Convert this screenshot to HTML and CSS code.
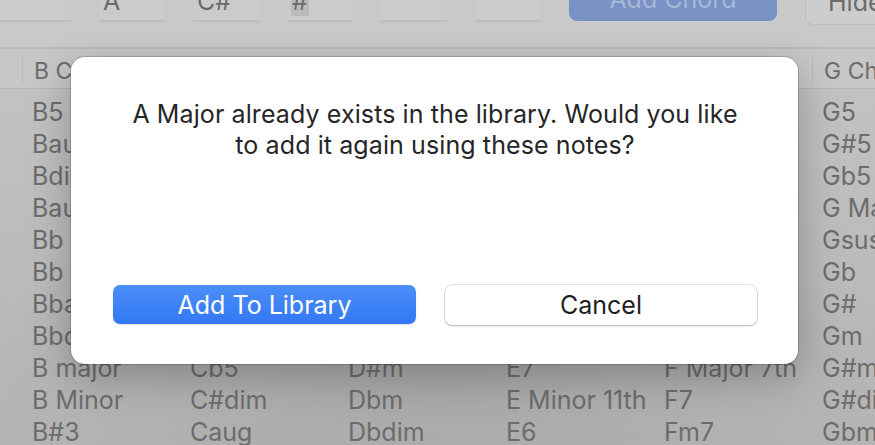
FILE: index.html
```html
<!DOCTYPE html>
<html>
<head>
<meta charset="utf-8">
<link rel="stylesheet" href="styles.css">
</head>
<body>
<div class="window">
  <div class="toolbar">
    <div class="field f-first"></div>
    <div class="field">A</div>
    <div class="field">C#</div>
    <div class="field"><span class="sel">#</span></div>
    <div class="field"></div>
    <div class="field"></div>
    <div class="add-chord">Add Chord</div>
    <div class="hide-btn">Hide</div>
  </div>
  <div class="table">
    <div class="header">
      <div class="spacer"></div>
      <div class="hcell">B Chords</div>
      <div class="hcell">C Chords</div>
      <div class="hcell">D Chords</div>
      <div class="hcell">E Chords</div>
      <div class="hcell">F Chords</div>
      <div class="hcell">G Chords</div>
    </div>
    <div class="body">
      <div class="spacer"></div>
      <div class="col">
        <div>B5</div><div>Baug</div><div>Bdim</div><div>Baug7</div><div>Bb Major</div><div>Bb Minor</div><div>Bbaug</div><div>Bbdim</div><div>B major</div><div>B Minor</div><div>B#3</div>
      </div>
      <div class="col">
        <div>C5</div><div>C#5</div><div>Cb</div><div>C Major</div><div>Csus4</div><div>C#</div><div>Cm</div><div>C#m</div><div>Cb5</div><div>C#dim</div><div>Caug</div>
      </div>
      <div class="col">
        <div>D5</div><div>D#5</div><div>Db5</div><div>D Major</div><div>Dsus4</div><div>Db</div><div>D#</div><div>Dm</div><div>D#m</div><div>Dbm</div><div>Dbdim</div>
      </div>
      <div class="col">
        <div>E5</div><div>E#5</div><div>Eb5</div><div>E Major</div><div>Esus4</div><div>Eb</div><div>Em</div><div>E#m</div><div>E7</div><div>E Minor 11th</div><div>E6</div>
      </div>
      <div class="col">
        <div>F5</div><div>F#5</div><div>Fb5</div><div>F Major</div><div>Fsus4</div><div>Fb</div><div>F#</div><div>Fm</div><div>F Major 7th</div><div>F7</div><div>Fm7</div>
      </div>
      <div class="col">
        <div>G5</div><div>G#5</div><div>Gb5</div><div>G Major</div><div>Gsus4</div><div>Gb</div><div>G#</div><div>Gm</div><div>G#m</div><div>G#dim</div><div>Gbm</div>
      </div>
    </div>
  </div>
</div>

<div class="dialog">
  <p class="message">A Major already exists in the library. Would you like<br>to add it again using these notes?</p>
  <div class="buttons">
    <button class="btn primary">Add To Library</button>
    <button class="btn secondary">Cancel</button>
  </div>
</div>
</body>
</html>
```

FILE: styles.css
```css
html, body {
  margin: 0;
  padding: 0;
  width: 875px;
  height: 445px;
  overflow: hidden;
}

body {
  font-family: Inter, "Noto Sans", sans-serif;
  background: #c6c6c6;
  position: relative;
}

.window {
  width: 875px;
  height: 445px;
  overflow: hidden;
  display: flex;
  flex-direction: column;
  color: #6c6c6c;
}

.toolbar {
  display: flex;
  align-items: flex-start;
  background: #c9c9c9;
  border-bottom: 2px solid #bababa;
  box-sizing: border-box;
  height: 49px;
  flex: none;
}

.field {
  flex: none;
  width: 66px;
  height: 30px;
  margin-top: -9px;
  margin-right: 28px;
  box-sizing: border-box;
  background: #cbcbcb;
  border-bottom: 1px solid #bebebe;
  box-shadow: 0 1px 1px rgba(0,0,0,0.06);
  font-size: 25px;
  line-height: 20px;
  padding-left: 4px;
  color: #6a6a6a;
  white-space: nowrap;
}

.field.f-first {
  width: 71px;
}

.sel {
  background: #bababa;
  padding: 0 1px;
  display: inline-block;
  height: 25px;
  margin-top: -9px;
  padding-top: 9px;
  line-height: 20px;
  vertical-align: top;
}

.add-chord {
  flex: none;
  width: 208px;
  height: 42px;
  margin-top: -21px;
  border-radius: 8px;
  background: #7892c4;
  color: #a9b8d8;
  font-size: 25px;
  line-height: 24px;
  text-align: center;
  box-sizing: border-box;
  padding-top: 8px;
  white-space: nowrap;
}

.hide-btn {
  flex: none;
  margin-left: 28px;
  width: 90px;
  height: 45px;
  margin-top: -20px;
  border-radius: 8px;
  background: #cdcdcd;
  border: 1px solid #bdbdbd;
  box-sizing: border-box;
  font-size: 25px;
  line-height: 24px;
  padding-left: 22px;
  padding-top: 9px;
  color: #6a6a6a;
  white-space: nowrap;
}

.table {
  flex: 1;
  display: flex;
  flex-direction: column;
  background: linear-gradient(180deg, #c4c4c4 0%, #bdbdbd 40%, #b6b6b6 100%);
}

.header {
  display: flex;
  height: 40px;
  flex: none;
  border-bottom: 1px solid #b6b6b6;
  background: #c7c7c7;
  box-sizing: border-box;
}

.spacer {
  width: 22px;
  flex: none;
}

.hcell {
  width: 158px;
  flex: none;
  box-sizing: border-box;
  border-left: 1px solid #bababa;
  margin: 5px 0 4px;
  padding-left: 11px;
  padding-top: 3px;
  font-size: 23px;
  line-height: 28px;
  white-space: nowrap;
  overflow: hidden;
}

.body {
  display: flex;
  padding-top: 7px;
  background: radial-gradient(ellipse 520px 180px at 440px 300px, rgba(0,0,0,0.08), rgba(0,0,0,0) 100%);
  flex: 1;
}

.col {
  width: 158px;
  flex: none;
  padding-left: 10px;
  box-sizing: border-box;
  font-size: 25px;
  white-space: nowrap;
}

.col > div {
  height: 32px;
  line-height: 32px;
}

.dialog {
  position: absolute;
  left: 71px;
  top: 57px;
  width: 727px;
  height: 307px;
  box-sizing: border-box;
  background: #ffffff;
  border-radius: 14px;
  box-shadow: 0 0 0 1px rgba(0,0,0,0.16), 0 12px 40px rgba(0,0,0,0.26);
  display: flex;
  flex-direction: column;
  justify-content: space-between;
  padding: 42px 41px 39px 42px;
}

.message {
  margin: 0;
  text-align: center;
  font-size: 25px;
  letter-spacing: 0.1px;
  line-height: 31px;
  color: #262626;
  white-space: nowrap;
}

.buttons {
  display: flex;
  gap: 29px;
}

.btn {
  font-family: Inter, "Noto Sans", sans-serif;
  font-size: 25px;
  height: 40px;
  border-radius: 7px;
  border: none;
  padding: 0;
  margin: 0;
}

.btn.primary {
  width: 303px;
  height: 39px;
  color: #ffffff;
  background: linear-gradient(180deg, #4b8ff8 0%, #3377f5 100%);
  box-shadow: 0 1px 2px rgba(0,0,0,0.12);
}

.btn.secondary {
  width: 312px;
  color: #1f1f1f;
  background: #ffffff;
  box-shadow: 0 0 0 0.5px rgba(0,0,0,0.22), 0 1px 2px rgba(0,0,0,0.2);
}
```
